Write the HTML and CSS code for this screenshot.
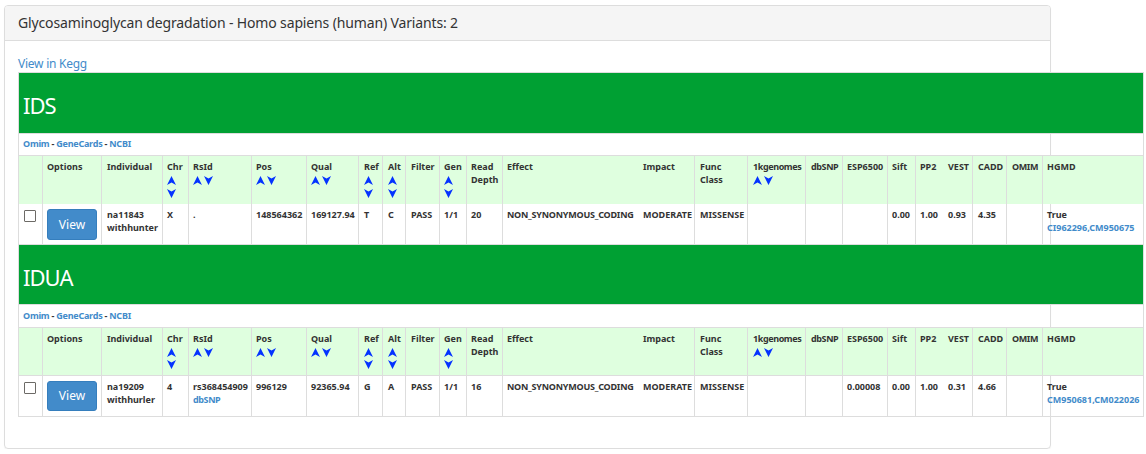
FILE: index.html
```html
<!DOCTYPE html>
<html lang="en">
<head>
<meta charset="utf-8">
<title>Glycosaminoglycan degradation</title>
<link rel="stylesheet" href="styles.css">
</head>
<body>
<svg class="defs" width="0" height="0"><defs>
<symbol id="up" viewBox="0 0 9 9"><path d="M4.5 0 9 9 4.5 6.6 0 9Z"/></symbol>
<symbol id="down" viewBox="0 0 9 9"><path d="M0 0 4.5 2.4 9 0 4.5 9Z"/></symbol>
</defs></svg>
<section class="panel">
<header class="panel-heading"><h1>Glycosaminoglycan degradation - Homo sapiens (human) Variants: 2</h1></header>
<div class="panel-body">
<a class="kegg" href="#">View in Kegg</a>
<table class="variants">
<colgroup><col class="c24"><col class="c59"><col class="c61"><col class="c26"><col class="c63"><col class="c55"><col class="c52"><col class="c24"><col class="c23"><col class="c34"><col class="c27"><col class="c36"><col class="c136"><col class="c56"><col class="c53"><col class="c58"><col class="c37"><col class="c45"><col class="c28"><col class="c28"><col class="c29"><col class="c34"><col class="c36"><col class="c102"></colgroup>
<tbody>
<tr class="gene first"><td colspan="24"><h2>IDS</h2></td></tr>
<tr class="links"><td colspan="24"><a href="#">Omim</a> - <a href="#">GeneCards</a> - <a href="#">NCBI</a></td></tr>
<tr class="head"><th></th><th>Options</th><th class="in">Individual</th><th>Chr<span class="sort stack"><svg><use href="#up"/></svg><svg><use href="#down"/></svg></span></th><th>RsId<span class="sort"><svg><use href="#up"/></svg><svg><use href="#down"/></svg></span></th><th>Pos<span class="sort"><svg><use href="#up"/></svg><svg><use href="#down"/></svg></span></th><th>Qual<span class="sort"><svg><use href="#up"/></svg><svg><use href="#down"/></svg></span></th><th class="in">Ref<span class="sort stack"><svg><use href="#up"/></svg><svg><use href="#down"/></svg></span></th><th class="in">Alt<span class="sort stack"><svg><use href="#up"/></svg><svg><use href="#down"/></svg></span></th><th class="in">Filter</th><th>Gen<span class="sort stack"><svg><use href="#up"/></svg><svg><use href="#down"/></svg></span></th><th>Read<br>Depth</th><th>Effect</th><th class="open">Impact</th><th class="in">Func<br>Class</th><th class="in tight">1kgenomes<span class="sort"><svg><use href="#up"/></svg><svg><use href="#down"/></svg></span></th><th class="in tight">dbSNP</th><th>ESP6500</th><th>Sift</th><th>PP2</th><th class="open">VEST</th><th class="in">CADD</th><th class="in tight">OMIM</th><th>HGMD</th></tr>
<tr class="data"><td><input type="checkbox"></td><td><a class="btn" href="#">View</a></td><td class="in">na11843<br>withhunter</td><td>X</td><td>.</td><td>148564362</td><td>169127.94</td><td class="in">T</td><td class="in">C</td><td class="in">PASS</td><td>1/1</td><td>20</td><td class="effect">NON_SYNONYMOUS_CODING</td><td class="open">MODERATE</td><td class="in">MISSENSE</td><td></td><td></td><td></td><td>0.00</td><td>1.00</td><td class="open">0.93</td><td class="in">4.35</td><td></td><td>True<br><a href="#">CI962296,CM950675</a></td></tr>
</tbody>
<tbody class="second">
<tr class="gene"><td colspan="24"><h2>IDUA</h2></td></tr>
<tr class="links"><td colspan="24"><a href="#">Omim</a> - <a href="#">GeneCards</a> - <a href="#">NCBI</a></td></tr>
<tr class="head"><th></th><th>Options</th><th class="in">Individual</th><th>Chr<span class="sort stack"><svg><use href="#up"/></svg><svg><use href="#down"/></svg></span></th><th>RsId<span class="sort"><svg><use href="#up"/></svg><svg><use href="#down"/></svg></span></th><th>Pos<span class="sort"><svg><use href="#up"/></svg><svg><use href="#down"/></svg></span></th><th>Qual<span class="sort"><svg><use href="#up"/></svg><svg><use href="#down"/></svg></span></th><th class="in">Ref<span class="sort stack"><svg><use href="#up"/></svg><svg><use href="#down"/></svg></span></th><th class="in">Alt<span class="sort stack"><svg><use href="#up"/></svg><svg><use href="#down"/></svg></span></th><th class="in">Filter</th><th>Gen<span class="sort stack"><svg><use href="#up"/></svg><svg><use href="#down"/></svg></span></th><th>Read<br>Depth</th><th>Effect</th><th class="open">Impact</th><th class="in">Func<br>Class</th><th class="in tight">1kgenomes<span class="sort"><svg><use href="#up"/></svg><svg><use href="#down"/></svg></span></th><th class="in tight">dbSNP</th><th>ESP6500</th><th>Sift</th><th>PP2</th><th class="open">VEST</th><th class="in">CADD</th><th class="in tight">OMIM</th><th>HGMD</th></tr>
<tr class="data"><td><input type="checkbox"></td><td><a class="btn" href="#">View</a></td><td class="in">na19209<br>withhurler</td><td>4</td><td>rs368454909<br><a class="tight" href="#">dbSNP</a></td><td>996129</td><td>92365.94</td><td class="in">G</td><td class="in">A</td><td class="in">PASS</td><td>1/1</td><td>16</td><td class="effect">NON_SYNONYMOUS_CODING</td><td class="open">MODERATE</td><td class="in">MISSENSE</td><td></td><td></td><td>0.00008</td><td>0.00</td><td>1.00</td><td class="open">0.31</td><td class="in">4.66</td><td></td><td>True<br><a href="#">CM950681,CM022026</a></td></tr>
</tbody>
</table>
</div>
</section>
</body>
</html>
```
FILE: styles.css
```css
* { box-sizing: border-box; }
html, body { overflow: hidden; }
body { margin: 0; padding: 5px 0 0 4px; background: #fff; color: #333; font-family: "Noto Sans", sans-serif; }
a { color: #428bca; text-decoration: none; }
.defs { display: block; height: 0; }
.panel { width: 1047px; height: 444px; border: 1px solid #ddd; border-radius: 4px; box-shadow: 0 1px 1px rgba(0,0,0,.05); }
.panel-heading { height: 35px; padding: 0 13px; background: #f5f5f5; border-bottom: 1px solid #ddd; border-radius: 3px 3px 0 0; }
h1 { margin: 0; font-size: 14px; font-weight: 400; line-height: 34px; letter-spacing: -.14px; white-space: nowrap; }
.panel-body { padding: 14px 13px 0; }
.kegg { display: block; height: 17px; font-size: 12px; line-height: 17px; letter-spacing: -.25px; }
.variants { width: 1126px; table-layout: fixed; border-collapse: separate; border-spacing: 0; border-right: 1px solid #ddd; font-size: 9px; font-weight: 700; line-height: 13px; }
.c23 { width: 23px; } .c24 { width: 24px; } .c26 { width: 26px; } .c27 { width: 27px; } .c28 { width: 28px; } .c29 { width: 29px; }
.c34 { width: 34px; } .c36 { width: 36px; } .c37 { width: 37px; } .c45 { width: 45px; } .c52 { width: 52px; } .c53 { width: 53px; }
.c55 { width: 55px; } .c56 { width: 56px; } .c58 { width: 58px; } .c59 { width: 59px; } .c61 { width: 61px; } .c63 { width: 63px; }
.c102 { width: 101px; } .c136 { width: 136px; }
td, th { padding: 4px 0 0 4px; border-left: 1px solid #ddd; text-align: left; vertical-align: top; white-space: nowrap; }
.in { padding-left: 5px; }
.open { border-left: 0; padding-left: 5px; }
.tight { letter-spacing: -.4px; }
.effect { letter-spacing: -.22px; }
.gene td { height: 61px; padding-top: 19px; background: #00a033; border-bottom: 1px solid #ddd; }
.gene.first td { height: 62px; border-top: 1px solid #ddd; }
.second .gene td { height: 60px; }
h2 { margin: 0; color: #fff; font-size: 22px; font-weight: 400; line-height: 27px; letter-spacing: -1px; }
.links td { height: 22px; padding-top: 3px; border-bottom: 1px solid #ddd; letter-spacing: -.24px; }
.second .links td { height: 23px; padding-top: 4px; }
.head th { height: 48px; background: #dfffdf; }
.second .head th { border-bottom: 1px solid #ddd; }
.data td { height: 41px; border-bottom: 1px solid #ddd; }
.sort { display: flex; gap: 2px; padding-top: 3px; }
.stack { flex-direction: column; gap: 4px; }
.second .stack { gap: 3px; }
.sort svg { display: block; width: 9px; height: 9px; fill: #0433ff; }
input { display: block; appearance: none; width: 12px; height: 12px; margin: 2px 0 0 1px; border: 1px solid #6c6a66; border-radius: 1px; background: #fff; }
.btn { display: block; width: 50px; height: 31px; margin-top: 1px; border: 1px solid #357ebd; border-radius: 3px; background: #428bca; color: #fff; font-size: 12px; font-weight: 400; line-height: 29px; text-align: center; }
.second .btn { height: 30px; line-height: 28px; }
```
